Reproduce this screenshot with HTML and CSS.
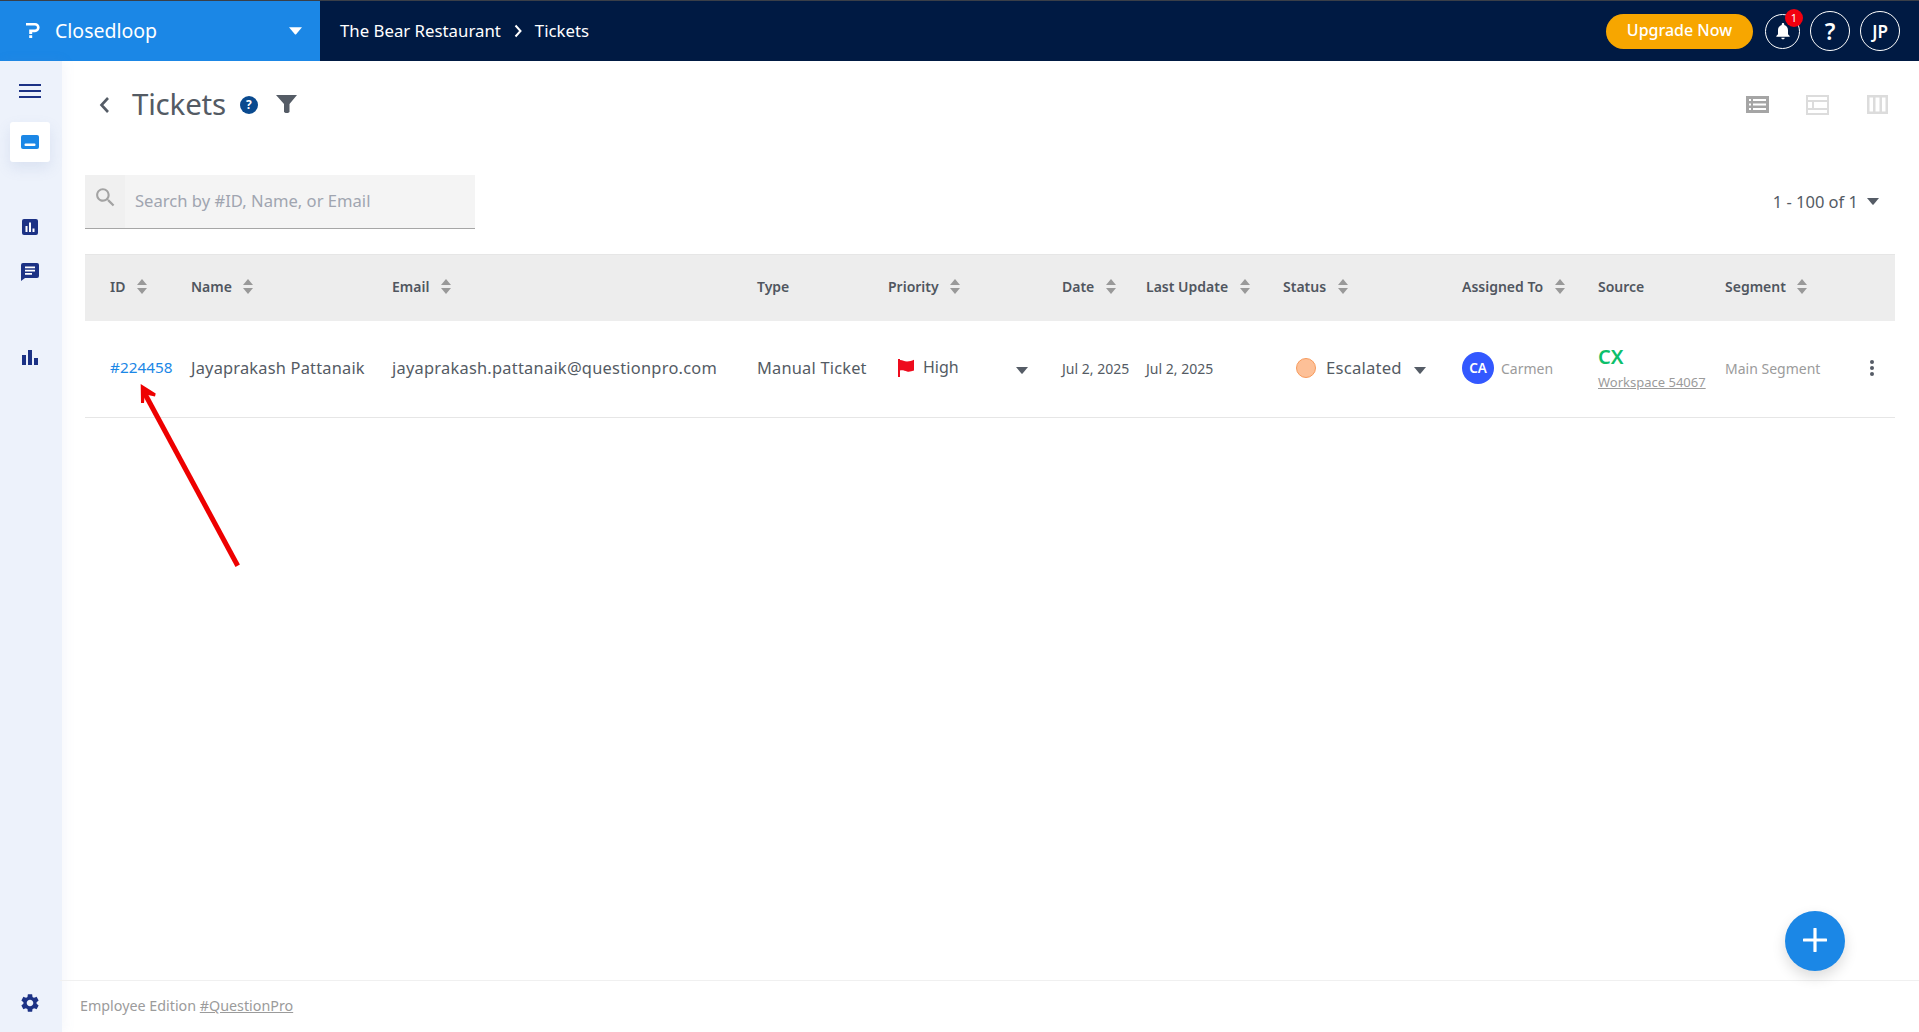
FILE: index.html
```html
<!DOCTYPE html>
<html lang="en">
<head>
<meta charset="utf-8">
<title>Tickets</title>
<link rel="stylesheet" href="styles.css">
</head>
<body>
<svg class="defs" width="0" height="0">
  <symbol id="sort" viewBox="0 0 10 15"><path d="M5 0l5 6H0zM5 15L0 9h10z"/></symbol>
  <symbol id="caret" viewBox="0 0 12 7"><path d="M0 0h12L6.600 6.400a.8.8 0 0 1-1.200 0z"/></symbol>
</svg>
<header class="topbar">
  <div class="brand">
    <svg class="brand-logo" viewBox="0 0 14 15"><path d="M0 0h9a4.600 4.600 0 0 1 0 9.200H6.200V11H3.200V6.600H9a2 2 0 0 0 0-4H0zM3.200 12.200h3V15h-3z" fill="#fff"/></svg>
    <span class="brand-name">Closedloop</span>
    <svg class="brand-caret"><use href="#caret"/></svg>
  </div>
  <nav class="crumbs">
    <span>The Bear Restaurant</span>
    <svg class="crumb-sep" viewBox="0 0 8 14"><path d="M1.500 1.500L6.500 7l-5 5.500" fill="none" stroke="#fff" stroke-width="2"/></svg>
    <span>Tickets</span>
  </nav>
  <div class="top-actions">
    <button class="upgrade">Upgrade Now</button>
    <div class="round round-bell">
      <svg class="bell" viewBox="0 0 24 24"><path fill="#fff" d="M12 22c1.100 0 2-.9 2-2h-4c0 1.100.9 2 2 2zm6-6v-5c0-3.070-1.630-5.640-4.500-6.320V4c0-.83-.67-1.500-1.500-1.500s-1.500.67-1.500 1.500v.68C7.640 5.360 6 7.920 6 11v5l-2 2v1h16v-1l-2-2z"/></svg>
      <span class="badge">1</span>
    </div>
    <div class="round round-lg help">?</div>
    <div class="round round-lg">JP</div>
  </div>
</header>

<div class="shell">
  <aside class="sidebar">
    <div class="burger"><i></i><i></i><i></i></div>
    <div class="side-tile">
      <svg viewBox="0 0 18 14" width="18" height="14"><rect width="18" height="14" rx="2" fill="#1b87e6"/><rect x="3.500" y="8.500" width="11" height="2.500" rx="1" fill="#fff"/></svg>
    </div>
    <svg class="side-ic ic-report" viewBox="0 0 16 16" width="16" height="16"><rect width="16" height="16" rx="2" fill="#1c3285"/><path fill="#fff" d="M3.500 7h2v6h-2zM7 3.500h2V13H7zM10.500 9.500h2V13h-2z"/></svg>
    <svg class="side-ic ic-chat" viewBox="0 0 18 18" width="18" height="18"><path fill="#1c3285" d="M2 0h14a2 2 0 0 1 2 2v11a2 2 0 0 1-2 2H4l-4 3V2a2 2 0 0 1 2-2z"/><path fill="#fff" d="M4 3.500h10v1.700H4zM4 6.800h10v1.700H4zM4 10h7v1.700H4z"/></svg>
    <svg class="side-ic ic-bars" viewBox="0 0 16 16" width="16" height="16"><path fill="#1c3285" d="M0 6h4v10H0zM6 1h4v15H6zM12 9h4v7h-4z"/></svg>
    <svg class="side-ic ic-gear" viewBox="0 0 24 24" width="22" height="22"><path fill="#1c3285" d="M19.140 12.940c.04-.3.06-.61.06-.94 0-.32-.02-.64-.07-.94l2.030-1.580c.18-.14.23-.41.12-.61l-1.920-3.320c-.12-.22-.37-.29-.59-.22l-2.390.96c-.5-.38-1.030-.7-1.620-.94l-.36-2.540c-.04-.24-.24-.41-.48-.41h-3.840c-.24 0-.43.17-.47.41l-.36 2.540c-.59.24-1.130.57-1.620.94l-2.390-.96c-.22-.08-.47 0-.59.22L2.740 8.870c-.12.21-.08.47.12.61l2.030 1.580c-.05.3-.09.63-.09.94s.02.64.07.94l-2.030 1.580c-.18.14-.23.41-.12.61l1.920 3.320c.12.22.37.29.59.22l2.390-.96c.5.38 1.030.7 1.620.94l.36 2.540c.05.24.24.41.48.41h3.840c.24 0 .44-.17.47-.41l.36-2.540c.59-.24 1.130-.56 1.620-.94l2.390.96c.22.08.47 0 .59-.22l1.920-3.320c.12-.22.07-.47-.12-.61l-2.010-1.580zM12 15.600c-1.980 0-3.600-1.620-3.600-3.600s1.620-3.600 3.600-3.600 3.600 1.620 3.600 3.600-1.620 3.600-3.600 3.600z"/></svg>
  </aside>

  <main class="main">
    <div class="content">
      <div class="title-row">
        <svg class="back" viewBox="0 0 11 18"><path d="M9 2L2.500 9 9 16" fill="none" stroke="#555c66" stroke-width="2.600"/></svg>
        <h1 class="title">Tickets</h1>
        <span class="q-badge">?</span>
        <svg class="funnel" viewBox="0 0 21 18"><path fill="#555c66" d="M0 0h21l-7.500 9v8l-1.500 1H9.500L8 17V9z"/></svg>
        <div class="views">
          <svg viewBox="0 0 23 17" width="23" height="17"><path fill="#a5a5a5" fill-rule="evenodd" d="M0 0h23v17H0zM3 3v2h2V3zM7 3v2h13V3zM3 7.500v2h2v-2zM7 7.500v2h13v-2zM3 12v2h2v-2zM7 12v2h13v-2z"/></svg>
          <svg viewBox="0 0 23 20" width="23" height="20"><path fill="#dcdcdc" fill-rule="evenodd" d="M0 0h23v20H0zM2 2v3h19V2zM2 7v6h4V7zM8 7v6h13V7zM2 15v3h19v-3z"/></svg>
          <svg class="view-last" viewBox="0 0 21 19" width="21" height="19"><path fill="#dcdcdc" fill-rule="evenodd" d="M0 0h21v19H0zM2.500 2.500v14h3.500v-14zM8.500 2.500v14h4v-14zM15 2.500v14h3.500v-14z"/></svg>
        </div>
      </div>

      <div class="tools-row">
        <div class="search">
          <span class="search-ic"><svg viewBox="0 0 24 24" width="25" height="25"><path fill="#a3a3a3" d="M15.500 14h-.79l-.28-.27C15.410 12.590 16 11.110 16 9.500 16 5.910 13.090 3 9.500 3S3 5.910 3 9.500 5.910 16 9.500 16c1.610 0 3.090-.59 4.230-1.570l.27.28v.79l5 4.990L20.490 19l-4.990-5zm-6 0C7.010 14 5 11.990 5 9.500S7.010 5 9.500 5 14 7.010 14 9.500 11.990 14 9.500 14z"/></svg></span>
          <span class="search-text">Search by #ID, Name, or Email</span>
        </div>
        <div class="pager">1 - 100 of 1<svg class="caret-sm pager-caret"><use href="#caret"/></svg></div>
      </div>

      <section class="table">
        <div class="grid thead">
          <div class="th">ID<svg class="sort"><use href="#sort"/></svg></div>
          <div class="th">Name<svg class="sort"><use href="#sort"/></svg></div>
          <div class="th">Email<svg class="sort"><use href="#sort"/></svg></div>
          <div class="th">Type</div>
          <div class="th">Priority<svg class="sort"><use href="#sort"/></svg></div>
          <div class="th">Date<svg class="sort"><use href="#sort"/></svg></div>
          <div class="th">Last Update<svg class="sort"><use href="#sort"/></svg></div>
          <div class="th">Status<svg class="sort"><use href="#sort"/></svg></div>
          <div class="th">Assigned To<svg class="sort"><use href="#sort"/></svg></div>
          <div class="th">Source</div>
          <div class="th">Segment<svg class="sort"><use href="#sort"/></svg></div>
        </div>
        <div class="grid tbody">
          <a class="id-link txt">#224458</a>
          <div class="txt">Jayaprakash Pattanaik</div>
          <div class="txt txt-email">jayaprakash.pattanaik@questionpro.com</div>
          <div class="txt">Manual Ticket</div>
          <div class="cell-priority">
            <svg class="flag" viewBox="0 0 16 18"><path fill="#ee0b1d" d="M0 0h2v1c3 0 4 1.500 7 1.500S13.500 2 16 .8v10.700c-2.500 1-5 1.500-7 1s-4-1.500-7-1V18H0z"/></svg>
            <span class="high txt">High</span>
            <svg class="caret-sm push"><use href="#caret"/></svg>
          </div>
          <div class="small">Jul 2, 2025</div>
          <div class="small">Jul 2, 2025</div>
          <div class="cell-status">
            <span class="dot"></span>
            <span class="esc txt">Escalated</span>
            <svg class="caret-sm"><use href="#caret"/></svg>
          </div>
          <div class="cell-assign">
            <span class="avatar">CA</span>
            <span class="muted">Carmen</span>
          </div>
          <div class="cell-source">
            <span class="cx">CX</span>
            <a class="ws">Workspace 54067</a>
          </div>
          <div class="cell-segment">
            <span class="muted">Main Segment</span>
            <span class="kebab"><i></i><i></i><i></i></span>
          </div>
        </div>
      </section>
    </div>
    <footer class="footer">Employee Edition <a>#QuestionPro</a></footer>
  </main>
</div>

<button class="fab"><svg viewBox="0 0 24 24" width="24" height="24"><path d="M12 1v22M1 12h22" stroke="#fff" stroke-width="3.200" stroke-linecap="round"/></svg></button>
<svg class="annot" viewBox="0 0 110 190" width="110" height="190"><path d="M101.700 185.700L9 14" stroke="#ee0000" stroke-width="5" fill="none"/><path fill="#ee0000" d="M4.700 4L19.700 13.500 19 16.500 12 15 8.500 17 8 23 5 23z"/></svg>
</body>
</html>
```
FILE: styles.css
```css
* { box-sizing: border-box; }
html, body { margin: 0; height: 100%; }
body {
  font-family: "Noto Sans", "Open Sans", sans-serif;
  font-size: 16px;
  color: #545b64;
  background: #fff;
  display: flex;
  flex-direction: column;
  overflow: hidden;
  position: relative;
}
.defs { position: absolute; }

/* top bar */
.topbar {
  height: 61px;
  flex: none;
  display: flex;
  align-items: center;
  background: #001a43;
  border-top: 1px solid #3a3f48;
  color: #fff;
}
.brand {
  width: 320px;
  height: 100%;
  background: #1b87e6;
  display: flex;
  align-items: center;
  padding-left: 26px;
}
.brand-logo { width: 14px; height: 15px; margin-bottom: 1px; }
.brand-name { margin: 0 0 2px 15px; font-size: 19.500px; }
.brand-caret { width: 13px; height: 8px; margin-left: auto; margin-right: 18px; fill: #fff; }
.crumbs { display: flex; align-items: center; padding: 0 0 2px 20px; font-size: 16.800px; gap: 13px; }
.crumb-sep { width: 8px; height: 14px; margin-top: 2px; }
.top-actions { margin-left: auto; display: flex; align-items: center; padding-right: 19px; }
.upgrade {
  width: 147px;
  height: 35px;
  border: 0;
  border-radius: 18px;
  background: #f7a600;
  color: #fff;
  font: 500 16px "Noto Sans", sans-serif;
  padding: 0 0 3px;
}
.round {
  border: 1px solid #fff;
  border-radius: 50%;
  width: 35px;
  height: 35px;
  margin-left: 12px;
  display: flex;
  align-items: center;
  justify-content: center;
  position: relative;
}
.round-lg { width: 40px; height: 40px; font-weight: 600; font-size: 17px; margin-left: 10px; }
.help { font-size: 23px; }
.bell { width: 20px; height: 20px; }
.badge {
  position: absolute;
  top: -6px;
  left: 19px;
  width: 18px;
  height: 18px;
  border-radius: 50%;
  background: #f2000f;
  font-size: 11px;
  line-height: 18px;
  text-align: center;
  color: #fff;
}

/* shell */
.shell { flex: 1; display: flex; min-height: 0; }
.sidebar {
  width: 62px;
  flex: none;
  background: #edf2fb;
  display: flex;
  flex-direction: column;
  align-items: center;
  padding: 23px 2px 0 0;
  box-shadow: 2px 0 12px rgba(120, 140, 190, .08);
}
.burger { width: 22px; display: flex; flex-direction: column; gap: 4px; }
.burger i { display: block; height: 2px; background: #1c3285; }
.side-tile {
  width: 40px;
  height: 40px;
  margin-top: 24px;
  background: #fff;
  border-radius: 3px;
  display: flex;
  align-items: center;
  justify-content: center;
  box-shadow: 0 6px 14px rgba(120, 140, 190, .16);
}
.ic-report { margin-top: 57px; }
.ic-chat { margin-top: 28px; }
.ic-bars { margin-top: 68px; }
.ic-gear { margin-top: auto; margin-bottom: 18px; }

.main { flex: 1; min-width: 0; display: flex; flex-direction: column; }
.content { flex: 1; padding: 0 24px 0 23px; }

.title-row { height: 86px; padding-left: 14px; display: flex; align-items: center; }
.back { width: 11px; height: 18px; margin-top: 1px; }
.title { margin: 0 0 0 22px; font-size: 29.500px; font-weight: 400; line-height: 1; letter-spacing: -.2px; }
.q-badge {
  width: 18px;
  height: 18px;
  margin-left: 14px;
  margin-top: 2px;
  border-radius: 50%;
  background: #0a4a8f;
  color: #fff;
  font-size: 12px;
  font-weight: 700;
  line-height: 18px;
  text-align: center;
}
.funnel { width: 21px; height: 18px; margin-left: 18px; }
.views { margin-left: auto; display: flex; align-items: center; gap: 37px; padding: 1px 7px 0 0; margin-right: 1px; }
.view-last { margin: 0 -1px 0 1px; }

.tools-row { display: flex; align-items: center; justify-content: space-between; margin-top: 28px; }
.search {
  width: 390px;
  height: 54px;
  background: #f4f4f4;
  border-bottom: 1px solid #a6a6a6;
  display: flex;
  align-items: center;
}
.search-ic { width: 40px; height: 100%; background: #f0f0f0; padding: 10px 0 0 8px; }
.search-text { margin: 0 0 2px 10px; font-size: 16.600px; color: #a0a5b0; }
.pager { display: flex; align-items: center; padding: 0 16px 1px 0; font-size: 16.500px; }
.pager-caret { margin-left: 9px; }
.caret-sm { width: 12px; height: 7px; fill: #555c66; }

/* table */
.table { margin-top: 25px; }
.grid {
  display: grid;
  grid-template-columns: 81px 201px 365px 131px 174px 84px 137px 179px 136px 127px 1fr;
  align-items: center;
  padding-left: 25px;
}
.thead { height: 67px; padding-bottom: 3px; background: #ededed; border-top: 1px solid #e6e6e6; }
.th { display: flex; align-items: center; gap: 11.500px; font-size: 14px; font-weight: 600; color: #50565f; }
.sort { width: 10px; height: 15px; fill: #999; }
.tbody { height: 97px; padding-bottom: 2px; border-bottom: 1px solid #e6e6e6; font-size: 16.400px; letter-spacing: .2px; }
.txt { margin-bottom: 2px; }
.txt-email { letter-spacing: .25px; }
.id-link { color: #1b87e6; font-size: 15.300px; letter-spacing: 0; }
.cell-priority { display: flex; align-items: center; padding: 0 34px 0 10px; }
.flag { width: 16px; height: 18px; margin-right: 9px; }
.high { font-size: 16px; letter-spacing: 0; }
.push { margin-left: auto; margin-top: 4px; }
.small { font-size: 14px; letter-spacing: 0; }
.cell-status { display: flex; align-items: center; padding-left: 13px; }
.dot { width: 20px; height: 20px; border-radius: 50%; background: #fdc097; border: 1px solid #f79a5c; margin-right: 10px; }
.esc { font-size: 16.700px; }
.cell-status .caret-sm { margin-left: 12px; margin-top: 4px; }
.cell-assign { display: flex; align-items: center; gap: 7px; letter-spacing: 0; }
.avatar {
  width: 32px;
  height: 32px;
  border-radius: 50%;
  background: #3358ff;
  color: #fff;
  font-size: 13.500px;
  font-weight: 600;
  line-height: 32px;
  text-align: center;
}
.muted { font-size: 14px; color: #9b9b9b; letter-spacing: 0; }
.cell-source { display: flex; flex-direction: column; gap: 4px; letter-spacing: 0; }
.cx { font-size: 20px; font-weight: 600; color: #0dbf6b; line-height: 24px; }
.ws { font-size: 13px; color: #9b9b9b; text-decoration: underline; line-height: 18px; }
.cell-segment { display: flex; align-items: center; justify-content: space-between; padding-right: 21px; }
.kebab { display: flex; flex-direction: column; gap: 2px; }
.kebab i { display: block; width: 4px; height: 4px; border-radius: 50%; background: #555c66; }

.footer {
  height: 52px;
  flex: none;
  border-top: 1px solid #f0f0f0;
  margin-left: -2px;
  padding: 15px 0 0 20px;
  font-size: 14.300px;
  color: #9b9b9b;
}
.footer a { text-decoration: underline; }

.fab {
  position: absolute;
  left: 1785px;
  top: 911px;
  width: 60px;
  height: 60px;
  border: 0;
  border-radius: 50%;
  background: #1b87e6;
  box-shadow: 0 6px 14px rgba(0, 0, 0, .14);
  display: flex;
  align-items: center;
  justify-content: center;
  padding: 0 0 2px;
}
.annot { position: absolute; left: 136px; top: 380px; }
```
